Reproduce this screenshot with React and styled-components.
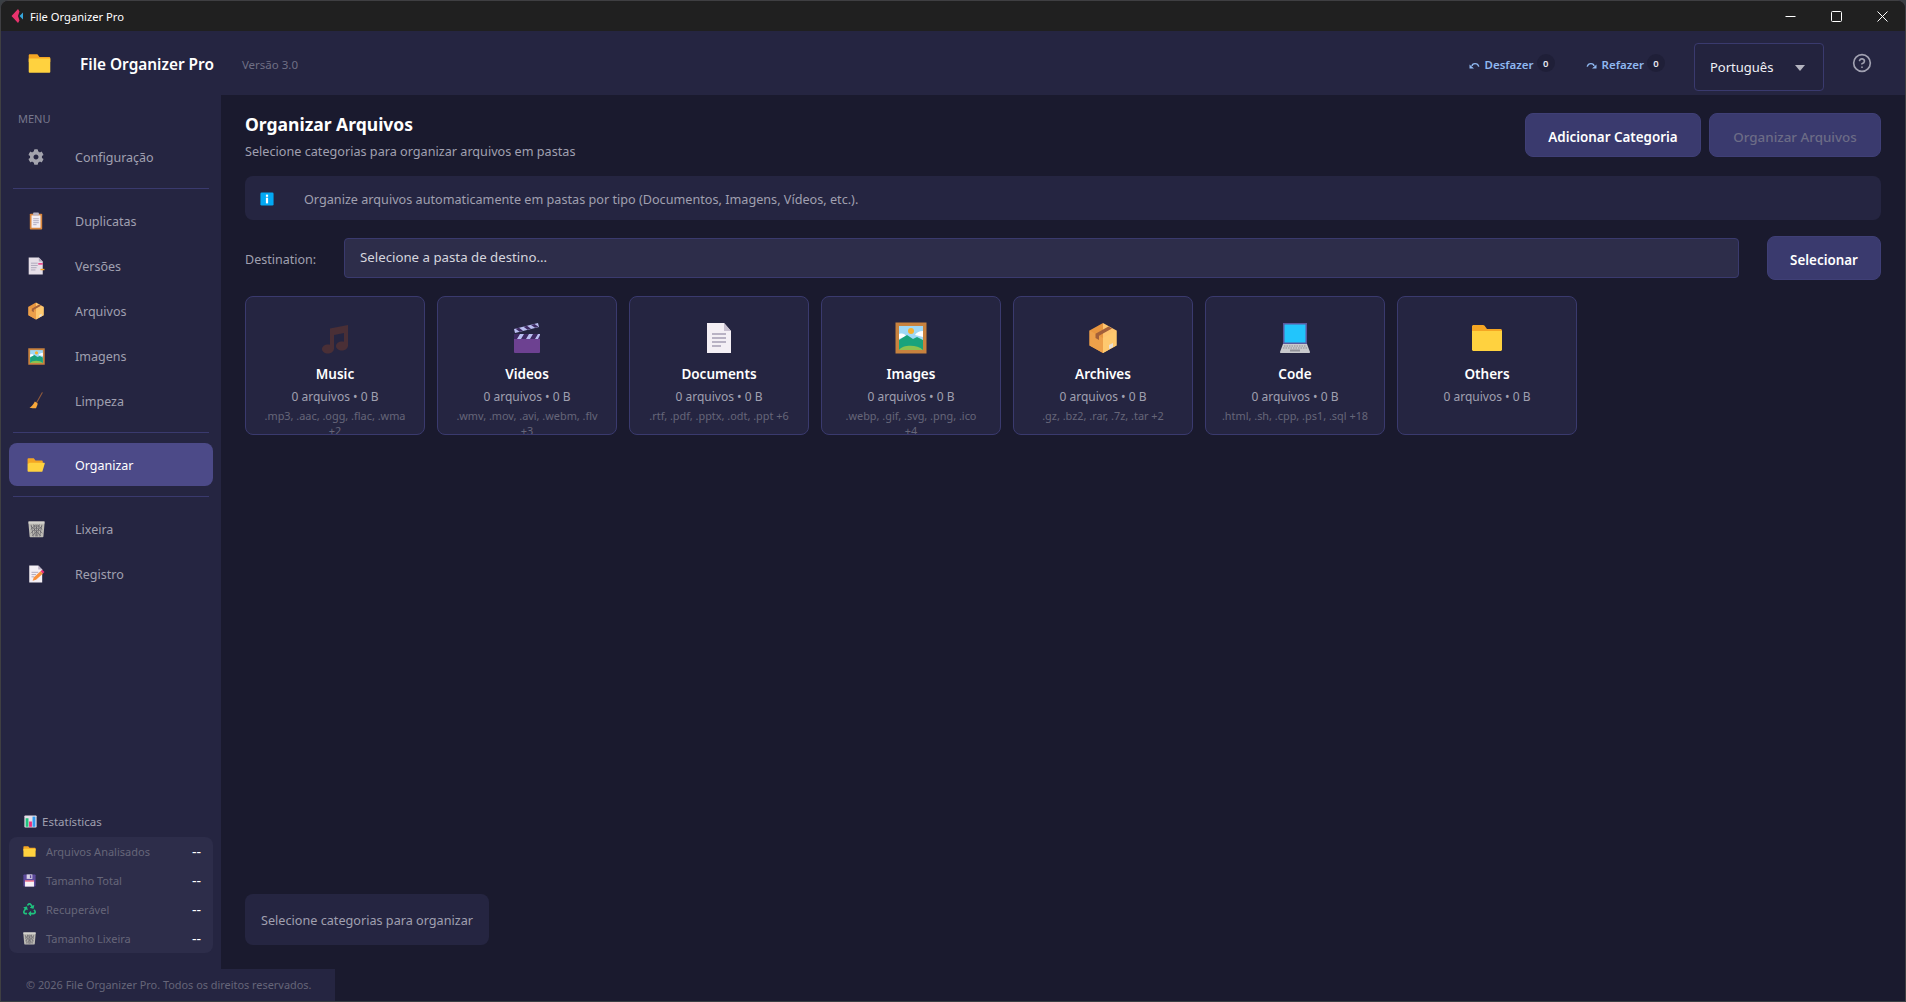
import React from "react";
import styled, { createGlobalStyle } from "styled-components";
import { FaCog, FaRecycle } from "react-icons/fa";
import { CircleHelp } from "lucide-react";

const GlobalStyle = createGlobalStyle`
  html, body {
    margin: 0;
    padding: 0;
    background: #3a3f44;
    overflow: hidden;
  }
  * { box-sizing: border-box; }
  body { font-family: "Noto Sans", "Open Sans", sans-serif; }
`;

const Window = styled.div`
  position: relative;
  width: 1906px;
  height: 1001px;
  display: flex;
  flex-direction: column;
  background: #1a1a2e;
  border: 1px solid #3f3f42;
  border-bottom: 0;
  border-radius: 8px 8px 0 0;
  overflow: hidden;
`;

const TitleBar = styled.div`
  height: 30px;
  flex: none;
  display: flex;
  align-items: center;
  background: #202020;
  padding-left: 10px;
  color: #fff;
  font-size: 11.2px;
`;

const TitleText = styled.span`
  margin-left: 5px;
  flex: 1;
`;

const WinButton = styled.div`
  width: 46px;
  height: 30px;
  display: flex;
  align-items: center;
  justify-content: center;
`;

const Header = styled.header`
  height: 64px;
  flex: none;
  display: flex;
  align-items: center;
  background: #252541;
  padding-left: 27px;
`;

const BrandName = styled.div`
  margin: 2px 0 0 29px;
  font-size: 15.4px;
  font-weight: 600;
  color: #fff;
`;

const Version = styled.div`
  margin: 2px 0 0 28px;
  font-size: 11.5px;
  color: #6f6f85;
`;

const HeaderRight = styled.div`
  margin-left: auto;
  align-self: stretch;
  display: flex;
  align-items: flex-start;
`;

const HistoryButton = styled.div`
  display: flex;
  align-items: center;
  height: 18px;
  margin-top: 23px;
  margin-right: ${(p) => p.$gap}px;
  color: #8fb8f0;
  font-size: 11.5px;
  font-weight: 600;
`;

const HistoryLabel = styled.span`
  margin: 3px 0 0 5px;
`;

const Badge = styled.span`
  width: 18px;
  height: 18px;
  margin-left: 3px;
  border-radius: 50%;
  background: #1f1f38;
  color: #e8e8f0;
  font-size: 9.5px;
  display: flex;
  align-items: center;
  justify-content: center;
`;

const LangSelect = styled.div`
  width: 130px;
  height: 48px;
  margin-top: 12px;
  display: flex;
  align-items: center;
  justify-content: space-between;
  padding: 0 18px 0 15px;
  background: #23233e;
  border: 1px solid #3a3a6e;
  border-radius: 4px;
  color: #f0f0f5;
  font-size: 13px;
`;

const Caret = styled.span`
  width: 0;
  height: 0;
  margin-top: 2px;
  border-left: 5.5px solid transparent;
  border-right: 5.5px solid transparent;
  border-top: 6px solid #b4b4c0;
`;

const HelpWrap = styled.div`
  width: 81px;
  display: flex;
  justify-content: center;
  padding-right: 5px;
  margin-top: 22px;
  color: #a0a0b0;
`;

const Body = styled.div`
  flex: 1;
  min-height: 0;
  display: flex;
`;

const Sidebar = styled.aside`
  width: 220px;
  flex: none;
  display: flex;
  flex-direction: column;
  background: #252541;
  padding: 0 8px 48px;
`;

const MenuLabel = styled.div`
  height: 40px;
  padding: 16px 0 0 9px;
  font-size: 11px;
  line-height: 16px;
  color: #77778c;
`;

const NavList = styled.nav`
  display: flex;
  flex-direction: column;
`;

const NavItem = styled.div`
  height: 43px;
  margin-bottom: 2px;
  display: flex;
  align-items: center;
  padding: 2px 0 0 18px;
  border-radius: 8px;
  background: ${(p) => (p.$active ? "#4c4a88" : "transparent")};
  color: ${(p) => (p.$active ? "#fff" : "#a0a0b0")};
  font-size: 12.5px;
`;

const NavIconSlot = styled.span`
  width: 18px;
  height: 18px;
  flex: none;
  display: flex;
  align-items: center;
  justify-content: center;
  margin-top: -1px;
`;

const NavText = styled.span`
  margin-left: 30px;
`;

const NavDivider = styled.div`
  height: 1px;
  margin: 8px 4px 10px;
  background: #3a3a6e;
`;

const StatsBlock = styled.div`
  margin-top: auto;
`;

const StatsTitle = styled.div`
  display: flex;
  align-items: center;
  gap: 5px;
  padding-left: 15px;
  margin-bottom: 8px;
  font-size: 11.5px;
  color: #a0a0b0;
`;

const StatsCard = styled.div`
  height: 116px;
  padding: 0 12px 0 14px;
  display: flex;
  flex-direction: column;
  justify-content: space-around;
  background: #2d2d4a;
  border-radius: 8px;
`;

const StatRow = styled.div`
  display: flex;
  align-items: center;
  height: 16px;
  font-size: 11px;
  color: #666679;
`;

const StatLabel = styled.span`
  margin-left: 10px;
  flex: 1;
`;

const StatValue = styled.span`
  color: #fff;
  font-size: 14px;
`;

const Main = styled.main`
  flex: 1;
  min-width: 0;
  display: flex;
  flex-direction: column;
  padding: 18px 24px 56px;
  background: #1a1a2e;
`;

const PageHead = styled.div`
  display: flex;
  justify-content: space-between;
  height: 44px;
`;

const PageTitle = styled.h1`
  margin: -1px 0 0;
  font-size: 17.5px;
  line-height: 24px;
  font-weight: 700;
  color: #fff;
`;

const PageSub = styled.p`
  margin: 7px 0 0;
  font-size: 12.65px;
  line-height: 16px;
  color: #a0a0b0;
`;

const HeadButtons = styled.div`
  display: flex;
  gap: 8px;
`;

const Button = styled.button`
  height: 44px;
  width: ${(p) => p.$w}px;
  background: #3a3a6e;
  border: 1px solid #3f3f76;
  border-radius: 8px;
  font-family: inherit;
  font-size: 13.4px;
  font-weight: ${(p) => (p.disabled ? 500 : 600)};
  color: ${(p) => (p.disabled ? "#6c6c86" : "#fff")};
  padding: 3px 0 0;
`;

const InfoBar = styled.div`
  height: 44px;
  margin-top: 19px;
  display: flex;
  align-items: center;
  padding: 1px 0 0 15px;
  background: #252541;
  border-radius: 8px;
  color: #a0a0b0;
  font-size: 12.65px;
`;

const InfoText = styled.span`
  margin-left: 30px;
`;

const DestRow = styled.div`
  height: 44px;
  margin-top: 16px;
  display: flex;
  align-items: center;
`;

const DestLabel = styled.label`
  width: 99px;
  font-size: 12.5px;
  color: #a0a0b0;
  margin-top: 2px;
`;

const DestInput = styled.div`
  flex: 1;
  height: 40px;
  display: flex;
  align-items: center;
  padding: 0 0 2px 15px;
  background: #2d2d4a;
  border: 1px solid #3a3a6e;
  border-radius: 4px;
  font-size: 13.25px;
  color: #d6d6de;
`;

const DestButton = styled(Button)`
  margin-left: 28px;
`;

const CardGrid = styled.div`
  margin-top: 16px;
  display: flex;
  gap: 12px;
`;

const Card = styled.div`
  width: 180px;
  height: 139px;
  overflow: hidden;
  display: flex;
  flex-direction: column;
  align-items: center;
  padding: 25px 10px 0;
  background: #252541;
  border: 1px solid #3a3a6e;
  border-radius: 8px;
  text-align: center;
`;

const CardName = styled.div`
  margin-top: 10px;
  font-size: 13.5px;
  line-height: 20px;
  font-weight: 600;
  color: #fff;
`;

const CardCount = styled.div`
  margin-top: 4px;
  font-size: 12px;
  line-height: 18px;
  color: #a0a0b0;
`;

const CardExt = styled.div`
  font-size: 10.9px;
  line-height: 14.5px;
  margin-top: 3px;
  color: #666679;
  white-space: pre-line;
`;

const StatusBox = styled.div`
  margin-top: auto;
  align-self: flex-start;
  height: 51px;
  display: flex;
  align-items: center;
  padding: 0 16px;
  background: #252541;
  border-radius: 8px;
  font-size: 12.65px;
  color: #a0a0b0;
`;

const Footer = styled.footer`
  position: absolute;
  left: 0;
  bottom: 0;
  width: 334px;
  height: 32px;
  display: flex;
  align-items: center;
  padding: 0 0 1px 25px;
  background: #252541;
  font-size: 10.9px;
  color: #666679;
`;

/* little emoji style drawings, 32x32 box */
const Svg = ({ size = 20, children }) => (
  <svg width={size} height={size} viewBox="0 0 32 32" style={{ flex: "none", display: "block" }}>
    {children}
  </svg>
);

const FolderIcon = ({ size }) => (
  <Svg size={size}>
    <path d="M1 4.500C1 3.700 1.700 3 2.500 3h9.600c.5 0 1 .2 1.300.6L16 7h13.500c.8 0 1.500.7 1.500 1.500V14H1z" fill="#f5a623" />
    <path d="M1 9h30v18.500c0 .8-.7 1.500-1.500 1.500h-27C1.700 29 1 28.300 1 27.500z" fill="#ffd23f" />
  </Svg>
);

const OpenFolderIcon = ({ size }) => (
  <Svg size={size}>
    <path d="M1 5.500C1 4.700 1.700 4 2.500 4h9.600l3 4h11.400c.8 0 1.500.7 1.500 1.500V14H1z" fill="#f5a623" />
    <path d="M1 26V14l4-2h25.500c.8 0 1.300.7 1.100 1.500L27.500 27c-.2.600-.7 1-1.300 1H3c-1.100 0-2-.9-2-2z" fill="#ffd23f" />
  </Svg>
);

const ClipboardIcon = ({ size }) => (
  <Svg size={size}>
    <rect x="5" y="3" width="22" height="28" rx="1.500" fill="#d9873e" />
    <rect x="8" y="6" width="16" height="22" fill="#f3eef3" />
    <rect x="11" y="1" width="10" height="5" rx="1" fill="#b9b4c4" />
    <path d="M11 12h10M11 15.500h10M11 19h10M11 22.500h6" stroke="#a59fb4" strokeWidth="1.500" />
  </Svg>
);

const TabsIcon = ({ size }) => (
  <Svg size={size}>
    <path d="M3 1h18l7 7v23H3z" fill="#e6dfe8" />
    <path d="M21 1l7 7h-7z" fill="#b3a9bd" />
    <path d="M7 11h12M7 15h12M7 19h10M7 23h8" stroke="#a59fb4" strokeWidth="1.500" />
    <rect x="20" y="11" width="8" height="2.500" fill="#ec2f7a" />
    <rect x="24" y="21" width="7" height="2.500" fill="#f5a623" />
  </Svg>
);

const BoxIcon = ({ size }) => (
  <Svg size={size}>
    <path d="M16 1L2.500 8.500v15L16 31z" fill="#e8963f" />
    <path d="M16 1l13.500 7.500v15L16 31z" fill="#fec46e" />
    <path d="M2.500 8.500L16 16v15L2.500 23.500z" fill="#eda04a" />
    <path d="M16 16l13.500-7.500v15L16 31z" fill="#fec96f" />
    <path d="M8.500 11.800l13-7.300 3.500 2-13 7.300V18l-3.500-2z" fill="#a2603a" />
    <path d="M22 23l4-2v4l-4 2z" fill="#e6dfd8" />
  </Svg>
);

const PictureIcon = ({ size }) => (
  <Svg size={size}>
    <rect x="0.500" y="0.500" width="31" height="31" fill="#c8823e" />
    <rect x="4" y="4" width="24" height="24" fill="#9fd8f6" />
    <circle cx="16" cy="9" r="3" fill="#f7b02f" />
    <path d="M4 12c4-1 6 0 7 2l-7 3zM28 9c-4 0-7 2-8 4l8 2z" fill="#fff" />
    <path d="M4 18l8-5 6 4 4-2 6 3v10H4z" fill="#1aa37c" />
    <path d="M4 28c3-5 18-6 24 0z" fill="#8dc14f" />
  </Svg>
);

const BroomIcon = ({ size }) => (
  <Svg size={size}>
    <path d="M27 1.500L17 19" stroke="#8f5a3c" strokeWidth="2" strokeLinecap="round" />
    <path d="M14 17l5 3.500c-.5 3.500-2 6-3 8.500-3.500 0-8-.5-11.500-1 3.500-1.500 7-6 9.500-11z" fill="#f9a83a" />
  </Svg>
);

const BasketIcon = ({ size }) => (
  <Svg size={size}>
    <path d="M1 1h30v5l-2 23c0 1-.6 1.500-1.500 1.500h-23c-.9 0-1.500-.5-1.500-1.500L1 6z" fill="#bdbbb5" />
    <path d="M6 7l4 22M11 7l3 22M16 7v22M21 7l-3 22M26 7l-4 22M5 9l19 19M10 7l17 16M17 7l10 9M27 9L8 28M22 7L5 23M15 7L5 16" stroke="#5a5860" strokeWidth="1.200" />
    <rect x="1" y="1" width="30" height="4" fill="#d4d2cd" />
  </Svg>
);

const MemoIcon = ({ size }) => (
  <Svg size={size}>
    <path d="M4 1h16l7 7v23H4z" fill="#f4eff5" />
    <path d="M20 1l7 7h-7z" fill="#bdb2c6" />
    <path d="M8 13h12M8 17h8M8 21h5" stroke="#a59fb4" strokeWidth="1.500" />
    <path d="M10 28l2-6 12-11 4.500 4-12.500 11z" fill="#f9913c" />
    <path d="M24 11l3-2.500 4 4-2.500 2.500z" fill="#ec2f7a" />
  </Svg>
);

const InfoIcon = ({ size }) => (
  <Svg size={size}>
    <rect x="1" y="1" width="30" height="30" rx="3" fill="#03a9f4" />
    <rect x="13.500" y="6" width="5" height="5" fill="#fff" />
    <rect x="13.500" y="13" width="5" height="13" fill="#fff" />
  </Svg>
);

const ChartIcon = ({ size }) => (
  <Svg size={size}>
    <rect x="1" y="1" width="30" height="30" rx="2" fill="#e6dfe8" />
    <rect x="4" y="8" width="7" height="21" fill="#1fc27e" />
    <rect x="12.500" y="16" width="7" height="13" fill="#ec2f7a" />
    <rect x="21" y="4" width="7" height="25" fill="#2f9bf0" />
  </Svg>
);

const FloppyIcon = ({ size }) => (
  <Svg size={size}>
    <rect x="1" y="1" width="30" height="30" rx="2" fill="#5d4a9c" />
    <rect x="9" y="1" width="14" height="11" fill="#d9d4e4" />
    <rect x="17" y="3" width="3.500" height="7" fill="#5d4a9c" />
    <rect x="5" y="16" width="22" height="15" fill="#f6f2f6" />
    <rect x="5" y="16" width="22" height="2.500" fill="#ec3a5e" />
  </Svg>
);

const MusicIcon = ({ size }) => (
  <Svg size={size}>
    <path d="M11 6.500L29 3v20.500c0 2.800-2.700 5-6 5s-6-2-6-4.500 2.700-4.500 6-4.500c.7 0 1.400.1 2 .3V11l-10 2v13.500c0 2.800-2.700 5-6 5s-6-2-6-4.500 2.700-4.500 6-4.500c.7 0 1.400.1 2 .3z" fill="#4a2f36" />
  </Svg>
);

const ClapperIcon = ({ size }) => (
  <Svg size={size}>
    <rect x="3" y="12" width="26" height="19" rx="1" fill="#6d4191" />
    <rect x="3" y="12" width="26" height="5" fill="#3f2b63" />
    <path d="M6 17l3-5h4l-3 5zM15 17l3-5h4l-3 5zM24 17l3-5h2v1l-2 4z" fill="#b9bdf0" />
    <path d="M3 7L27 1l1 4L4 11z" fill="#b9bdf0" />
    <path d="M8 5.800l4 3-3.500.9-4-3zM16 3.800l4 3-3.500.9-4-3zM23.500 2l4 2.800-3.500.9-4-2.800z" fill="#3f2b63" />
  </Svg>
);

const PageIcon = ({ size }) => (
  <Svg size={size}>
    <path d="M4 1h17l7 8v22H4z" fill="#f4eff5" />
    <path d="M21 1l7 8h-7z" fill="#c8bfd0" />
    <path d="M9 12h14M9 16h14M9 20h14M9 24h9" stroke="#a59fb4" strokeWidth="1.500" />
  </Svg>
);

const LaptopIcon = ({ size }) => (
  <Svg size={size}>
    <rect x="4" y="1" width="24" height="21" fill="#5a5aa0" />
    <rect x="5.500" y="2.500" width="21" height="18" fill="#22c5fc" />
    <path d="M4 22h24l3 8c0 .6-.4 1-1 1H2c-.6 0-1-.4-1-1z" fill="#c9c9cc" />
    <path d="M5 24h22M4 26h24" stroke="#8f8f96" strokeWidth="1" strokeDasharray="1.500 1" />
    <rect x="11" y="27.500" width="10" height="2" fill="#8f8f96" />
  </Svg>
);

const AppLogo = () => (
  <svg width="14" height="14" viewBox="0 0 14 14" style={{ flex: "none" }}>
    <path d="M7 0L8.500 2.500 7 7l1.500 4.500L7 14 0.500 7z" fill="#e8336d" />
    <path d="M12 3.500V10.500L8.500 7z" fill="#35a7dc" />
  </svg>
);

const ArrowIcon = ({ flip }) => (
  <svg width="11" height="11" viewBox="0 0 11 11" style={{ flex: "none", transform: flip ? "scaleX(-1)" : "none", marginTop: 4 }}>
    <path d="M3 6c.3-2.800 5.500-3.600 6.800.6" fill="none" stroke="#8fb8f0" strokeWidth="1.400" />
    <path d="M.5 4.500L5 8.500H.5z" fill="#8fb8f0" />
  </svg>
);

const navTop = [{ label: "Configuração", icon: <FaCog size={16} color="#a3a3ad" /> }];
const navTools = [
  { label: "Duplicatas", icon: <ClipboardIcon size={18} /> },
  { label: "Versões", icon: <TabsIcon size={18} /> },
  { label: "Arquivos", icon: <BoxIcon size={18} /> },
  { label: "Imagens", icon: <PictureIcon size={17} /> },
  { label: "Limpeza", icon: <BroomIcon size={18} /> },
];
const navEnd = [
  { label: "Lixeira", icon: <BasketIcon size={17} /> },
  { label: "Registro", icon: <MemoIcon size={18} /> },
];

const stats = [
  { label: "Arquivos Analisados", icon: <FolderIcon size={13} /> },
  { label: "Tamanho Total", icon: <FloppyIcon size={13} /> },
  { label: "Recuperável", icon: <FaRecycle size={13} color="#1fc27e" /> },
  { label: "Tamanho Lixeira", icon: <BasketIcon size={13} /> },
];

const categories = [
  { name: "Music", Icon: MusicIcon, ext: ".mp3, .aac, .ogg, .flac, .wma\n+2" },
  { name: "Videos", Icon: ClapperIcon, ext: ".wmv, .mov, .avi, .webm, .flv\n+3" },
  { name: "Documents", Icon: PageIcon, ext: ".rtf, .pdf, .pptx, .odt, .ppt +6" },
  { name: "Images", Icon: PictureIcon, ext: ".webp, .gif, .svg, .png, .ico\n+4" },
  { name: "Archives", Icon: BoxIcon, ext: ".gz, .bz2, .rar, .7z, .tar +2" },
  { name: "Code", Icon: LaptopIcon, ext: ".html, .sh, .cpp, .ps1, .sql +18" },
  { name: "Others", Icon: FolderIcon, ext: "" },
];

const renderNav = (items) =>
  items.map((item) => (
    <NavItem key={item.label}>
      <NavIconSlot>{item.icon}</NavIconSlot>
      <NavText>{item.label}</NavText>
    </NavItem>
  ));

export default function App() {
  return (
    <>
      <GlobalStyle />
      <Window>
        <TitleBar>
          <AppLogo />
          <TitleText>File Organizer Pro</TitleText>
          <WinButton>
            <svg width="11" height="11" viewBox="0 0 11 11"><path d="M0.500 5.500h10" stroke="#fff" /></svg>
          </WinButton>
          <WinButton>
            <svg width="11" height="11" viewBox="0 0 11 11"><rect x="0.500" y="0.500" width="10" height="10" rx="1" fill="none" stroke="#fff" /></svg>
          </WinButton>
          <WinButton>
            <svg width="11" height="11" viewBox="0 0 11 11"><path d="M0.500 0.500l10 10M10.500 0.500l-10 10" stroke="#fff" /></svg>
          </WinButton>
        </TitleBar>

        <Header>
          <FolderIcon size={23} />
          <BrandName>File Organizer Pro</BrandName>
          <Version>Versão 3.0</Version>
          <HeaderRight>
            <HistoryButton $gap={31}>
              <ArrowIcon />
              <HistoryLabel>Desfazer</HistoryLabel>
              <Badge>0</Badge>
            </HistoryButton>
            <HistoryButton $gap={29}>
              <ArrowIcon flip />
              <HistoryLabel>Refazer</HistoryLabel>
              <Badge>0</Badge>
            </HistoryButton>
            <LangSelect>
              Português
              <Caret />
            </LangSelect>
            <HelpWrap>
              <CircleHelp size={20} strokeWidth={2} />
            </HelpWrap>
          </HeaderRight>
        </Header>

        <Body>
          <Sidebar>
            <MenuLabel>MENU</MenuLabel>
            <NavList>
              {renderNav(navTop)}
              <NavDivider />
              {renderNav(navTools)}
              <NavDivider />
              <NavItem $active>
                <NavIconSlot><OpenFolderIcon size={18} /></NavIconSlot>
                <NavText>Organizar</NavText>
              </NavItem>
              <NavDivider />
              {renderNav(navEnd)}
            </NavList>
            <StatsBlock>
              <StatsTitle>
                <ChartIcon size={13} />
                Estatísticas
              </StatsTitle>
              <StatsCard>
                {stats.map((s) => (
                  <StatRow key={s.label}>
                    {s.icon}
                    <StatLabel>{s.label}</StatLabel>
                    <StatValue>--</StatValue>
                  </StatRow>
                ))}
              </StatsCard>
            </StatsBlock>
          </Sidebar>

          <Main>
            <PageHead>
              <div>
                <PageTitle>Organizar Arquivos</PageTitle>
                <PageSub>Selecione categorias para organizar arquivos em pastas</PageSub>
              </div>
              <HeadButtons>
                <Button $w={176}>Adicionar Categoria</Button>
                <Button $w={172} disabled>Organizar Arquivos</Button>
              </HeadButtons>
            </PageHead>

            <InfoBar>
              <InfoIcon size={14} />
              <InfoText>Organize arquivos automaticamente em pastas por tipo (Documentos, Imagens, Vídeos, etc.).</InfoText>
            </InfoBar>

            <DestRow>
              <DestLabel>Destination:</DestLabel>
              <DestInput>Selecione a pasta de destino...</DestInput>
              <DestButton $w={114}>Selecionar</DestButton>
            </DestRow>

            <CardGrid>
              {categories.map(({ name, Icon, ext }) => (
                <Card key={name}>
                  <Icon size={32} />
                  <CardName>{name}</CardName>
                  <CardCount>0 arquivos • 0 B</CardCount>
                  {ext && <CardExt>{ext}</CardExt>}
                </Card>
              ))}
            </CardGrid>

            <StatusBox>Selecione categorias para organizar</StatusBox>
          </Main>
        </Body>

        <Footer>© 2026 File Organizer Pro. Todos os direitos reservados.</Footer>
      </Window>
    </>
  );
}
